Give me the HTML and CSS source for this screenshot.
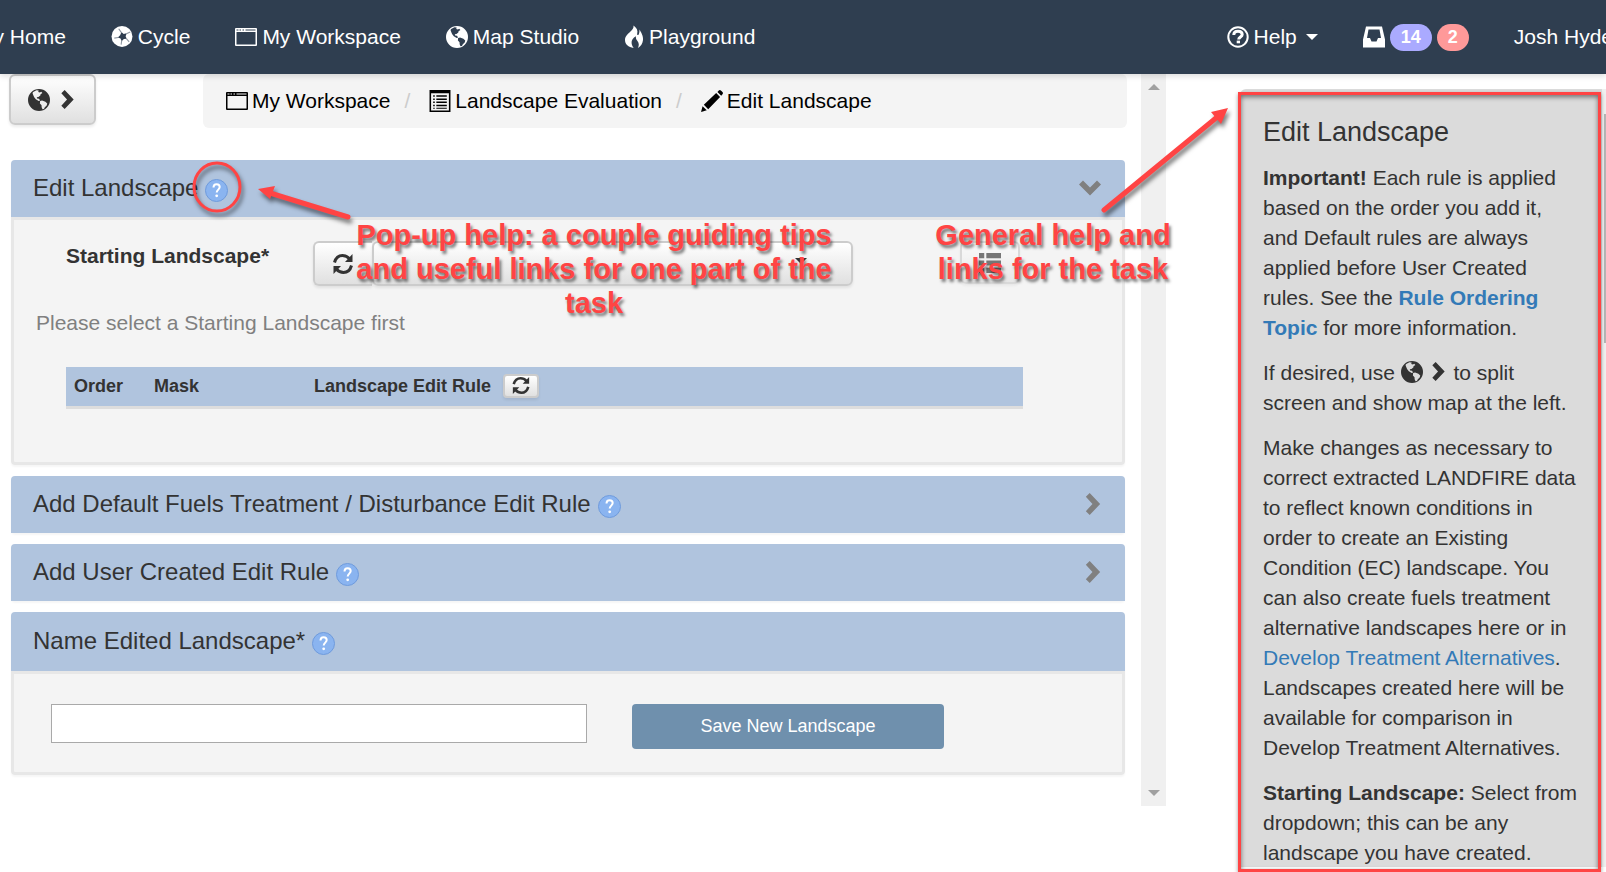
FILE: index.html
```html
<!DOCTYPE html>
<html lang="en">
<head>
<meta charset="utf-8">
<title>Edit Landscape</title>
<link rel="stylesheet" href="styles.css">
</head>
<body>
<svg class="sprite" aria-hidden="true">
  <symbol id="i-globe" viewBox="0 0 20 20"><path fill-rule="evenodd" d="M10 0a10 10 0 1 1 0 20 10 10 0 0 1 0-20zM5.500 2.200l2.200-1 2 .2-.4 1.300 1.500.5 1.200-.8 1.100 1.200-1.700 1.100-.2 1.300-1.700 1.300-1.500.2.300 1.200 1.700.1 1 1.700-1.300.5-2.600-1.600-1.600-2.200-1.300-3 .2-1.200zM11 11l1.800-.5 3 1 1.700 1.700-.5 1.900-1.700 1.400-.8 1.700-1.300.3-.8-2-.1-1.800-1.500-1.600z"/></symbol>
  <symbol id="i-cycle" viewBox="0 0 20 20"><circle cx="10" cy="9.500" r="9.500"/><path class="cut" d="M9.500 5.500l2 1.700 2.800-.6-1 2.700 1 2.400-2.600.2-2 2-1-2.600-2.500-.9 2.100-1.900z"/><path class="cut-line" d="M9.500 6L7 2.500M14 7l3.500-1.500M14 11.500l2.500 3M9.700 13.500l-.5 3.500M6.500 10.500L3 11"/></symbol>
  <symbol id="i-window" viewBox="0 0 22 20"><path fill-rule="evenodd" d="M1 1h20a1 1 0 0 1 1 1v16a1 1 0 0 1-1 1H1a1 1 0 0 1-1-1V2a1 1 0 0 1 1-1zM1.500 2.500v1h2v-1zm3 0v1h1.500v-1zm3 0v1H9v-1zm3 0v1h10v-1zM1.500 5v12.500h19V5z"/></symbol>
  <symbol id="i-fire" viewBox="0 0 20 24"><path d="M9.500 0c3.500 2.500 4.500 5 3.700 8.200-.2 1.100.4 1.700 1.100 1.200 1-.8 1.300-3.500 1.200-5.400 1.400 2.500 4 6.500 3.500 10.500-.4 3.500-2.100 6.500-5.100 8 1.400-2.600 1.200-5-.6-7.200-1.100-1.400-1.700-2.700-1.300-4.600-3 1.500-4.700 4-4.400 6.800.1 1.800.8 3.400 2.100 5C4.300 21.700 1 18.700 1 14.500c0-3.700 2.600-5.700 5.200-8.300C8.500 4 9.900 2.600 9.500 0z"/></symbol>
  <symbol id="i-list-alt" viewBox="0 0 20 21"><path fill-rule="evenodd" d="M0 0h20v21H0zM1.500 3v16.500h17V3zM3.500 5H5v1.500H3.500zm3 0h10v1.500h-10zm-3 3H5v1.500H3.500zm3 0h10v1.500h-10zm-3 3H5v1.500H3.500zm3 0h10v1.500h-10zm-3 3H5v1.500H3.500zm3 0h10v1.500h-10zm0 3h10v1h-10zm-3 0H5v1H3.500z"/></symbol>
  <symbol id="i-pencil" viewBox="0 0 21 21"><path d="M0 21l1.500-5.600 4 4zM2.700 14L14.500 2.900l3.700 3.700L6.900 18.300zM15.700 1.800L17 .5q1-.9 2 0L20.500 2q.9 1 0 2l-1.200 1.400z"/></symbol>
  <symbol id="i-right" viewBox="0 0 14 20"><path d="M.5 3.500L4 0l9.500 10L4 20 .5 16.500 6.500 10z"/></symbol>
  <symbol id="i-down" viewBox="0 0 22 16"><path d="M0 4.500L4 .5l7 7 7-7 4 4-11 11z"/></symbol>
  <symbol id="i-question" viewBox="0 0 22 22"><circle class="ring" cx="11" cy="11" r="9.700"/><path class="hook" d="M6.800 8.900c0-2.700 1.800-3.700 4.200-3.700s4.200 1.200 4.200 3.200c0 2.600-3.500 2.500-3.500 5"/><path d="M9.700 14.600H13v2.700H9.700z"/></symbol>
  <symbol id="i-inbox" viewBox="0 0 22 21"><path fill-rule="evenodd" d="M3 0h16l3 13v8H0v-8zM5.500 3L4 11.500h3L8.500 15h5l1.500-3.500h3L16.500 3z"/></symbol>
  <symbol id="i-refresh" viewBox="0 0 21 22"><path class="arc" d="M2 9.500C3.300 4.800 6 2.500 10 2.500c3 0 5 1 7 3.300M19 12.500c-1.300 4.700-4 7-8 7-3 0-5-1-7-3.300"/><path d="M20 1v8h-7.500zM1 21v-8h7.500z"/></symbol>
  <symbol id="i-th-list" viewBox="0 0 21 19"><path d="M0 0h5v5H0zm7 0h14v5H7zM0 7h5v5H0zm7 0h14v5H7zM0 14h5v5H0zm7 0h14v5H7z"/></symbol>
  <symbol id="i-help" viewBox="0 0 23 23"><circle class="disc" cx="11.500" cy="11.500" r="11"/><path class="mark" d="M8.500 8.500c0-2.400 1.300-3.300 3.100-3.300s3.100 1.100 3.100 2.900c0 2.400-3 2.700-3 5.400"/><circle class="dot" cx="11.700" cy="16.800" r="1.400"/></symbol>
</svg>

<header class="navbar">
  <nav class="nav" aria-label="Main">
    <a href="#">My Home</a>
    <a href="#"><svg class="icon"><use href="#i-cycle"/></svg>Cycle</a>
    <a href="#"><svg class="icon"><use href="#i-window"/></svg>My Workspace</a>
    <a href="#"><svg class="icon"><use href="#i-globe"/></svg>Map Studio</a>
    <a href="#"><svg class="icon icon-fire"><use href="#i-fire"/></svg>Playground</a>
  </nav>
  <nav class="nav" aria-label="Account">
    <a href="#"><svg class="icon"><use href="#i-question"/></svg>Help<span class="caret caret-gap"></span></a>
    <a href="#" aria-label="Inbox"><svg class="icon"><use href="#i-inbox"/></svg><span class="badge">14</span><span class="badge badge-alert">2</span></a>
    <a href="#">Josh Hyde<span class="caret"></span></a>
  </nav>
</header>

<div class="page">
  <div class="workspace">
    <main class="content">
      <div class="toolbar">
        <button class="btn btn-map" type="button" aria-label="Split screen and show map"><svg class="icon"><use href="#i-globe"/></svg><svg class="icon icon-right"><use href="#i-right"/></svg></button>
        <ol class="breadcrumb">
          <li><a href="#"><svg class="icon"><use href="#i-window"/></svg>My Workspace</a></li>
          <li><a href="#"><svg class="icon"><use href="#i-list-alt"/></svg>Landscape Evaluation</a></li>
          <li><a href="#"><svg class="icon"><use href="#i-pencil"/></svg>Edit Landscape</a></li>
        </ol>
      </div>

      <section class="panel">
        <div class="panel-heading">
          <h2>Edit Landscape</h2>
          <button class="help-dot" type="button" aria-label="Help"><svg><use href="#i-help"/></svg></button>
          <button class="toggle" type="button" aria-label="Collapse"><svg class="icon-down"><use href="#i-down"/></svg></button>
        </div>
        <div class="panel-body">
          <div class="start-row">
            <label for="landscape">Starting Landscape*</label>
            <div class="picker">
              <button class="btn btn-refresh" type="button" aria-label="Refresh"><svg class="icon"><use href="#i-refresh"/></svg></button>
              <div class="select-wrap">
                <select class="btn" id="landscape"><option></option></select>
                <span class="caret"></span>
              </div>
            </div>
            <button class="btn btn-list" type="button" disabled aria-label="Details"><svg class="icon"><use href="#i-th-list"/></svg></button>
          </div>
          <p class="hint">Please select a Starting Landscape first</p>
          <table class="rules">
            <thead>
              <tr>
                <th class="col-order">Order</th>
                <th class="col-mask">Mask</th>
                <th><span class="rule-head">Landscape Edit Rule<button class="btn btn-small" type="button" aria-label="Refresh rules"><svg><use href="#i-refresh"/></svg></button></span></th>
              </tr>
            </thead>
          </table>
        </div>
      </section>

      <section class="panel">
        <div class="panel-heading">
          <h2>Add Default Fuels Treatment / Disturbance Edit Rule</h2>
          <button class="help-dot" type="button" aria-label="Help"><svg><use href="#i-help"/></svg></button>
          <button class="toggle" type="button" aria-label="Expand"><svg class="icon-next"><use href="#i-right"/></svg></button>
        </div>
      </section>

      <section class="panel">
        <div class="panel-heading">
          <h2>Add User Created Edit Rule</h2>
          <button class="help-dot" type="button" aria-label="Help"><svg><use href="#i-help"/></svg></button>
          <button class="toggle" type="button" aria-label="Expand"><svg class="icon-next"><use href="#i-right"/></svg></button>
        </div>
      </section>

      <section class="panel">
        <div class="panel-heading panel-heading-tall">
          <h2 id="name-label">Name Edited Landscape*</h2>
          <button class="help-dot" type="button" aria-label="Help"><svg><use href="#i-help"/></svg></button>
        </div>
        <div class="panel-body name-row">
          <input type="text" aria-labelledby="name-label">
          <button class="btn-save" type="button">Save New Landscape</button>
        </div>
      </section>
    </main>
    <div class="scroll" aria-hidden="true"><span class="arrow-up"></span><span class="arrow-down"></span></div>
  </div>

  <aside class="help">
    <div class="help-text">
      <h3>Edit Landscape</h3>
      <p><b>Important!</b> Each rule is applied based on the order you add it, and Default rules are always applied before User Created rules. See the <a href="#"><b>Rule Ordering Topic</b></a> for more information.</p>
      <p>If desired, use <svg class="icon"><use href="#i-globe"/></svg> <svg class="icon icon-right"><use href="#i-right"/></svg> to split screen and show map at the left.</p>
      <p>Make changes as necessary to correct extracted LANDFIRE data to reflect known conditions in order to create an Existing Condition (EC) landscape. You can also create fuels treatment alternative landscapes here or in <a href="#">Develop Treatment Alternatives</a>. Landscapes created here will be available for comparison in Develop Treatment Alternatives.</p>
      <p><b>Starting Landscape:</b> Select from dropdown; this can be any landscape you have created.</p>
    </div>
    <div class="help-scroll" aria-hidden="true"></div>
    <div class="callout-box"></div>
  </aside>
</div>

<svg class="callout-arrows" aria-hidden="true">
  <ellipse cx="217" cy="187" rx="23" ry="24"/>
  <path class="shaft" d="M270 193l78 24M1104 210l112-92"/>
  <path class="head" d="M258 189l17-3-5 13zM1228 108l-17 4 10 12z"/>
</svg>
<p class="callout callout-popup">Pop-up help: a couple guiding tips and useful links for one part of the task</p>
<p class="callout callout-general">General help and links for the task</p>
</body>
</html>
```
FILE: styles.css
```css
* {
  box-sizing: border-box;
}

body {
  margin: 0;
  height: 100vh;
  overflow: hidden;
  position: relative;
  background: #fff;
  color: #333;
  font: 21px/30px "Liberation Sans", Arial, sans-serif;
}

h2,
h3,
p,
ol {
  margin: 0;
  padding: 0;
  font-weight: normal;
}

a {
  color: #337ab7;
  text-decoration: none;
}

button,
input,
select {
  font: inherit;
  color: inherit;
  margin: 0;
}

svg {
  fill: currentColor;
  flex: none;
}

.sprite {
  position: absolute;
  width: 0;
  height: 0;
}

.icon {
  width: 22px;
  height: 22px;
}

.icon-fire {
  width: 20px;
  height: 25px;
}

.icon-right {
  width: 19px;
  height: 19px;
}

.ring,
.hook {
  fill: none;
  stroke: currentColor;
  stroke-width: 2;
}

.hook {
  stroke-width: 3;
}

.arc {
  fill: none;
  stroke: currentColor;
  stroke-width: 3;
}

.cut {
  fill: #2f3e50;
}

.cut-line {
  stroke: #8d96a1;
  stroke-width: 1;
}

.caret {
  border: 6px solid transparent;
  border-top-color: currentColor;
  border-bottom: 0;
}

/* Navigation bar */

.navbar {
  position: relative;
  z-index: 1;
  display: flex;
  justify-content: space-between;
  height: 74px;
  padding: 0;
  background: #2f3e50;
  box-shadow: 0 2px 6px rgba(0, 0, 0, 0.15);
}

.nav {
  display: flex;
  gap: 45px;
  margin: 0 -24px;
}

.nav a {
  display: flex;
  align-items: center;
  gap: 5px;
  color: #fff;
  white-space: nowrap;
}

.caret-gap {
  margin-left: 4px;
}

.badge {
  padding: 0 11px;
  border-radius: 14px;
  background: #aaf;
  font-size: 18px;
  font-weight: bold;
  line-height: 27px;
}

.badge-alert {
  background: #f99;
}

/* Page columns */

.page {
  display: flex;
  align-items: flex-start;
}

.workspace {
  flex: 1;
  display: flex;
}

.content {
  flex: 1;
  padding-bottom: 31px;
}

.scroll {
  display: flex;
  flex-direction: column;
  justify-content: space-between;
  align-items: center;
  width: 25px;
  padding: 10px 0;
  background: #f0f0f0;
}

.arrow-up,
.arrow-down {
  border: 6px solid transparent;
}

.arrow-up {
  border-top: 0;
  border-bottom-color: #a0a0a0;
}

.arrow-down {
  border-bottom: 0;
  border-top-color: #a0a0a0;
}

.toolbar {
  display: flex;
  align-items: flex-start;
  gap: 107px;
  margin: 0 14px 32px 9px;
}

.btn {
  display: flex;
  align-items: center;
  justify-content: center;
  padding: 0;
  border: 2px solid #ccc;
  border-radius: 6px;
  background: linear-gradient(#fff, #e0e0e0);
  box-shadow: 0 2px 3px rgba(0, 0, 0, 0.08);
}

.btn-map {
  width: 87px;
  height: 51px;
  gap: 8px;
}

.breadcrumb {
  flex: 1;
  display: flex;
  align-items: center;
  height: 54px;
  padding: 0 23px;
  border-radius: 6px;
  background: #f4f4f4;
  list-style: none;
}

.breadcrumb li,
.breadcrumb a {
  display: flex;
  align-items: center;
}

.breadcrumb a {
  gap: 4px;
  color: #000;
}

.breadcrumb li + li::before {
  content: "/";
  padding: 0 19px 0 14px;
  color: #ccc;
}

/* Panels */

.panel {
  margin: 0 16px 11px 11px;
  border-radius: 4px;
  box-shadow: 0 2px 2px rgba(0, 0, 0, 0.04);
}

.panel:last-child {
  margin-bottom: 0;
}

.panel-heading {
  display: flex;
  align-items: center;
  gap: 7px;
  height: 57px;
  padding: 0 24px 2px 22px;
  border-radius: 4px 4px 0 0;
  background: #b0c4de;
}

.panel-heading-tall {
  height: 59px;
}

.panel-heading h2 {
  font-size: 24px;
  line-height: 30px;
}

.help-dot,
.toggle {
  display: flex;
  padding: 0;
  border: 0;
  background: none;
}

.help-dot {
  padding-top: 5px;
}

.help-dot svg {
  width: 23px;
  height: 23px;
}

.disc {
  fill: #8ab4f0;
  stroke: #6f9bdc;
}

.mark {
  fill: none;
  stroke: #fff;
  stroke-width: 2;
}

.dot {
  fill: #fff;
}

.toggle {
  margin-left: auto;
  color: #808080;
}

.icon-down {
  width: 22px;
  height: 16px;
}

.icon-next {
  width: 16px;
  height: 22px;
}

.panel-body {
  padding: 21px 52px;
  border: 3px solid #e7e7e7;
  border-radius: 0 0 4px 4px;
  background: #f4f4f4;
}

.start-row {
  display: grid;
  grid-template-columns: 247px 540px 60px;
  align-items: start;
}

.start-row label {
  font-weight: bold;
}

.start-row .btn-list {
  grid-column: 3;
  width: 60px;
  height: 43px;
  margin-left: 107px;
  opacity: 0.65;
}

.picker {
  display: flex;
}

.btn-refresh {
  width: 59px;
  height: 45px;
  padding-right: 2px;
  border-right: 0;
  border-radius: 6px 0 0 6px;
}

.select-wrap {
  position: relative;
  flex: 1;
}

.select-wrap select {
  width: 100%;
  height: 45px;
  appearance: none;
}

.select-wrap .caret {
  position: absolute;
  top: 17px;
  right: 46px;
}

.hint {
  margin: 22px 0 0 -30px;
  color: #808080;
}

.rules {
  width: 957px;
  max-width: 100%;
  margin: 29px 0 32px;
  border-collapse: separate;
  border-spacing: 0;
  table-layout: fixed;
  background: #b0c4de;
  border-bottom: 3px solid #ddd;
  font-size: 18px;
  line-height: 24px;
}

.rules th {
  height: 39px;
  padding: 0 8px 2px;
  text-align: left;
}

.col-order {
  width: 80px;
}

.col-mask {
  width: 160px;
}

.rule-head {
  display: flex;
  align-items: center;
  gap: 12px;
}

.btn-small {
  width: 36px;
  height: 24px;
  border-radius: 4px;
}

.btn-small svg {
  width: 18px;
  height: 19px;
}

.name-row {
  display: flex;
  align-items: flex-start;
  gap: 45px;
  height: 104px;
  padding: 30px 37px;
}

.name-row input {
  width: 536px;
  height: 39px;
  padding: 0 8px;
  border: 1px solid #a9a9a9;
  background: #fff;
}

.btn-save {
  width: 312px;
  height: 45px;
  padding: 0 0 2px;
  border: 0;
  border-radius: 4px;
  background: #6f90ad;
  color: #fff;
  font-size: 18px;
}

/* Help sidebar */

.help {
  position: relative;
  display: flex;
  width: 366px;
  height: calc(100vh - 94px);
  margin: 15px 0 0 74px;
}

.help-text {
  flex: 1;
  overflow: hidden;
  padding: 28px 21px 0 23px;
  border-radius: 6px 0 0 0;
  background: #dbdbdb;
}

.help-text h3 {
  margin-bottom: 16px;
  font-size: 27px;
  line-height: 30px;
}

.help-text p {
  margin-bottom: 15px;
}

.help-text .icon {
  vertical-align: -3px;
}

.help-text .icon-right {
  vertical-align: -1px;
}

.help-scroll {
  width: 4px;
  padding: 25px 0 0 2px;
  background: #f0f0f0;
}

.help-scroll::before {
  content: "";
  display: block;
  height: 229px;
  background: #b5b5b5;
}

/* Callouts drawn over the page */

.callout-box {
  position: absolute;
  inset: 3px 5px -5px -2px;
  border: 3px solid #f44;
  box-shadow: 0 2px 4px rgba(0, 0, 0, 0.4), inset 0 2px 5px rgba(0, 0, 0, 0.5);
  pointer-events: none;
}

.callout-arrows {
  position: absolute;
  top: 0;
  left: 0;
  z-index: 2;
  width: 100%;
  height: 100%;
  fill: none;
  stroke: #f44;
  stroke-width: 3;
  filter: drop-shadow(2px 4px 2px rgba(0, 0, 0, 0.5));
  pointer-events: none;
}

.shaft {
  stroke-width: 5;
  stroke-linecap: round;
}

.head {
  fill: #f44;
  stroke: none;
}

.callout {
  position: absolute;
  top: 218px;
  z-index: 2;
  color: #f44;
  font-size: 29px;
  font-weight: bold;
  line-height: 34px;
  text-align: center;
  text-shadow: 2px 3px 3px rgba(0, 0, 0, 0.5);
  pointer-events: none;
}

.callout-popup {
  left: 349px;
  width: 490px;
}

.callout-general {
  left: 928px;
  width: 250px;
}
```
